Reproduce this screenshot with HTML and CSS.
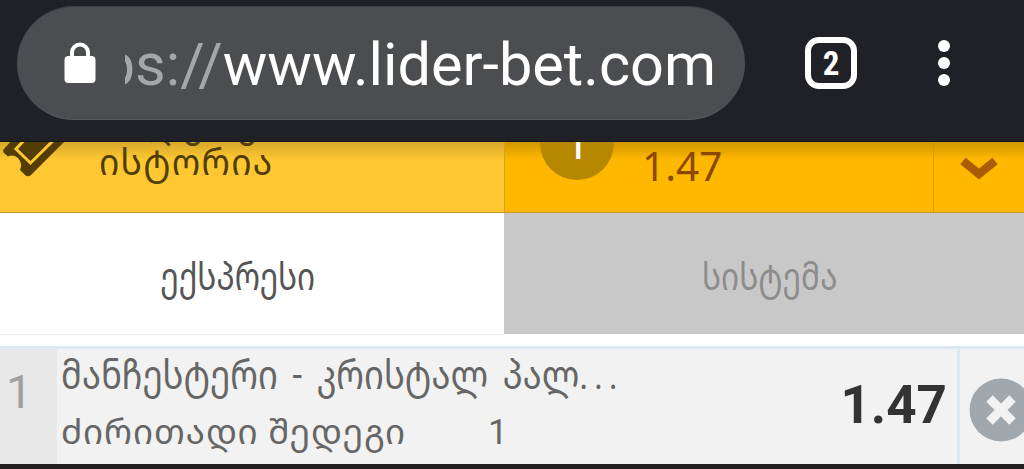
FILE: index.html
```html
<!DOCTYPE html>
<html lang="ka">
<head>
  <meta charset="UTF-8" />
  <meta name="viewport" content="width=device-width, initial-scale=1.0"/>
  <title>lider-bet.com</title>
  <link rel="stylesheet" href="styles.css">
</head>
<body>
  <header class="browser-bar">
    <div class="address">
      <svg class="lock" viewBox="0 0 32 42" width="32" height="42">
        <path d="M8 16V10.500a8 8 0 0 1 16 0V16" fill="none" stroke="#fff" stroke-width="4"/>
        <rect x="0.5" y="14" width="31" height="27" rx="4" fill="#fff"/>
      </svg>
      <div class="url"><span class="scheme">https://</span><span>www.lider-bet.com</span></div>
    </div>
    <div class="tab-count">2</div>
    <div class="menu"><i></i><i></i><i></i></div>
  </header>

  <div class="summary">
    <div class="history">
      <svg class="ticket" viewBox="0 0 64 36" width="64" height="36">
        <path d="M38 -30L3.500 7.500Q2.500 9 4 11L8 14.500Q13 12 18 16Q23 21 20 28L25 33Q28 35.500 31 33L70 -6Z" fill="#523e05"/>
        <path d="M52 -32L16 7L30.500 21L70 -18" fill="none" stroke="#ffc832" stroke-width="3"/>
      </svg>
      <div class="history-text">ბილეთების<br>ისტორია</div>
    </div>
    <div class="total">
      <span class="count">1</span>
      <span class="odds-total">1.47</span>
    </div>
    <div class="toggle">
      <svg viewBox="0 0 40 26" width="40" height="26">
        <path d="M4 6L20 19L36 6" fill="none" stroke="#ac5c00" stroke-width="8.500"/>
      </svg>
    </div>
  </div>

  <div class="tabs">
    <div class="tab active"><span>ექსპრესი</span></div>
    <div class="tab"><span>სისტემა</span></div>
  </div>

  <div class="bet">
    <div class="number">1</div>
    <div class="details">
      <div class="match">მანჩესტერი - კრისტალ პალ<span class="dots">...</span></div>
      <div class="market"><span class="market-name">ძირითადი შედეგი</span><span class="pick">1</span></div>
    </div>
    <div class="odds">1.47</div>
    <div class="remove">
      <svg viewBox="0 0 64 64" width="64" height="64">
        <circle cx="32" cy="32" r="31.500" fill="#a0a8ae"/>
        <path d="M20.500 20.500L43.500 43.500M43.500 20.500L20.500 43.500" stroke="#f2f2f2" stroke-width="9"/>
      </svg>
    </div>
  </div>
</body>
</html>
```

FILE: styles.css
```css
* {
  box-sizing: border-box;
}

body {
  margin: 0;
  height: 469px;
  overflow: hidden;
  background: #231f20;
  font-family: Roboto, "Noto Sans Georgian", "DejaVu Sans Condensed", "DejaVu Sans", sans-serif;
  color: #666;
}

.browser-bar {
  display: flex;
  height: 142px;
  padding-left: 17px;
  background: #202126;
  border-bottom: 1px solid #15161a;
  color: #fff;
}

.address {
  display: flex;
  width: 728px;
  height: 114px;
  margin-top: 5.5px;
  padding: 0 29px 0 47px;
  border-radius: 57px;
  background: #4c4d50;
  border-top: 1px solid #3e3f43;
  border-bottom: 1px solid #58595c;
}

.lock {
  flex: none;
  margin-top: 35px;
}

.url {
  display: flex;
  justify-content: flex-end;
  flex: 1;
  margin-left: 29px;
  overflow: hidden;
  font-size: 59.4px;
  line-height: 116px;
  white-space: nowrap;
}

.scheme {
  color: #a5a6a7;
}

.tab-count {
  width: 52px;
  height: 52px;
  margin: 37px 0 0 60px;
  border: 6px solid #fff;
  border-radius: 14px;
  font: bold 33px/41px "Roboto Condensed", Roboto, sans-serif;
  text-align: center;
}

.menu {
  display: flex;
  flex-direction: column;
  gap: 5px;
  margin: 40px 0 0 81px;
}

.menu i {
  width: 12px;
  height: 12px;
  border-radius: 50%;
  background: #fff;
}

.summary {
  display: flex;
  height: 71px;
  overflow: hidden;
  background: linear-gradient(rgba(0, 0, 0, 0.18), transparent 18px), #ffb800;
  border-bottom: 1px solid #c49b32;
}

.history {
  display: flex;
  width: 504px;
  background: linear-gradient(rgba(0, 0, 0, 0.16), transparent 18px), #ffc832;
  color: #523e05;
}

.history-text {
  margin: -36px 0 0 35px;
  font-size: 35.5px;
  line-height: 38px;
  letter-spacing: 1.2px;
}

.total {
  display: flex;
  width: 430px;
  border-left: 1px solid #d6a31e;
  border-right: 1px solid #d69a00;
}

.count {
  width: 74px;
  height: 74px;
  margin: -36px 0 0 35px;
  border-radius: 50%;
  background: #b88700;
  color: #fff;
  font-size: 45px;
  line-height: 76px;
  text-align: center;
}

.odds-total {
  margin-left: 28px;
  color: #8a4800;
  font-family: "Noto Sans", sans-serif;
  font-size: 40.5px;
  line-height: 47px;
}

.toggle {
  padding: 13px 0 0 25px;
}

.tabs {
  display: flex;
  height: 133px;
  background: #fff;
}

.tab {
  width: 520px;
  height: 121px;
  background: #c8c8c8;
  color: #8c8c8c;
  font-size: 39px;
  line-height: 129px;
  text-align: center;
  padding-left: 12px;
}

.tab span {
  display: inline-block;
  transform: scaleX(0.81);
}

.tab.active {
  width: 504px;
  height: 122px;
  padding: 0 28px 0 0;
  background: #fff;
  border-bottom: 1px solid #eee;
  color: #555;
}

.bet {
  display: flex;
  height: 118px;
  border-top: 3px solid #dce9f1;
  background: #f2f2f2;
}

.number {
  width: 57px;
  padding-left: 6px;
  background: #e8e8e8;
  color: #a0a0a0;
  font-size: 47px;
  line-height: 86px;
}

.details {
  width: 680px;
  padding-left: 4px;
  font-size: 35px;
  white-space: nowrap;
}

.match {
  height: 56px;
  font-size: 40px;
  line-height: 53px;
  word-spacing: 7px;
  transform: scaleX(0.865);
  transform-origin: left;
}

.dots {
  letter-spacing: 6.5px;
}

.market {
  display: flex;
  line-height: 56px;
}

.market-name {
  letter-spacing: 0.9px;
}

.pick {
  margin-left: 82px;
}

.odds {
  width: 220px;
  padding-right: 10px;
  color: #333;
  font-size: 53px;
  font-weight: bold;
  line-height: 113px;
  text-align: right;
}

.remove {
  flex: 1;
  padding: 28.5px 0 0 8.5px;
  border-left: 3px solid #dce9f1;
  overflow: hidden;
}
```
